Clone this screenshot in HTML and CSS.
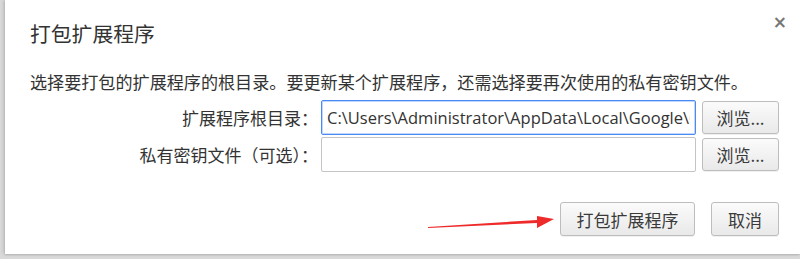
FILE: index.html
```html
<!DOCTYPE html>
<html lang="zh-CN">
<head>
<meta charset="utf-8">
<title>打包扩展程序</title>
<link rel="stylesheet" href="styles.css">
</head>
<body>
<div class="dialog">
  <div class="header">
    <h1 class="title">打包扩展程序</h1>
    <span class="close">×</span>
  </div>
  <p class="desc">选择要打包的扩展程序的根目录。要更新某个扩展程序，还需选择要再次使用的私有密钥文件。</p>
  <div class="form">
    <label class="label">扩展程序根目录：</label>
    <input class="field focused" type="text" value="C:\Users\Administrator\AppData\Local\Google\Chrome\User Data">
    <button class="btn browse">浏览...</button>
    <label class="label">私有密钥文件（可选）：</label>
    <input class="field" type="text" value="">
    <button class="btn browse">浏览...</button>
  </div>
  <div class="footer">
    <button class="btn pack">打包扩展程序</button>
    <button class="btn cancel">取消</button>
  </div>
  <svg class="arrow" width="140" height="24" viewBox="0 0 140 24">
    <polygon points="2,17 111,10 111,6 128,9 111,18 111,13 2,18" fill="#ee2a2a"/>
  </svg>
</div>
</body>
</html>
```
FILE: styles.css
```css
html, body {
  margin: 0;
  padding: 0;
}
body {
  width: 800px;
  height: 259px;
  background: #d9d9d9;
  overflow: hidden;
  font-family: "Noto Sans CJK SC", "Noto Sans", sans-serif;
  color: #333;
}
.dialog {
  position: relative;
  margin-left: 5px;
  height: 254px;
  box-sizing: border-box;
  background: #fff;
  padding: 18px 21px 0 25px;
  box-shadow: -2px 0 3px rgba(0,0,0,0.10), 0 1px 2px rgba(0,0,0,0.15);
}
.header {
  display: flex;
  justify-content: space-between;
  align-items: flex-start;
}
.title {
  margin: 0;
  font-size: 20.8px;
  font-weight: normal;
  line-height: 30px;
  color: #333;
}
.close {
  font-family: "DejaVu Sans", sans-serif;
  font-size: 17px;
  font-weight: bold;
  color: #777;
  line-height: 14px;
  margin-top: -3px;
  margin-right: -8px;
}
.desc {
  margin: 22px 0 0;
  font-size: 17.1px;
  line-height: 24px;
  white-space: nowrap;
}
.form {
  margin-top: 6px;
  display: grid;
  grid-template-columns: 1fr 375px 77px;
  column-gap: 6px;
  row-gap: 2px;
  align-items: center;
}
.label {
  text-align: right;
  font-size: 17px;
  margin-right: -3px;
  white-space: nowrap;
}
.field {
  box-sizing: border-box;
  height: 35px;
  width: 375px;
  margin: 0;
  border: 1px solid #c4c4c4;
  border-radius: 2px;
  padding: 0 5px;
  font-family: "Open Sans", "Noto Sans", sans-serif;
  font-size: 16.5px;
  color: #333;
  background: #fff;
  outline: none;
}
.field.focused {
  border-color: #4a8af4;
  box-shadow: inset 0 0 0 1px rgba(74,138,244,0.35);
}
.btn {
  box-sizing: border-box;
  margin: 0;
  border: 1px solid #bdbdbd;
  border-radius: 3px;
  background: linear-gradient(#fbfbfb, #e9e9e9);
  box-shadow: 0 1px 0 rgba(0,0,0,0.06);
  font-family: "Noto Sans CJK SC", sans-serif;
  font-size: 17px;
  color: #3a3a3a;
  padding: 0;
}
.browse {
  height: 33px;
  width: 77px;
}
.footer {
  margin-top: 30px;
  display: flex;
  justify-content: flex-end;
  gap: 16px;
}
.pack {
  width: 135px;
  height: 34px;
}
.cancel {
  width: 68px;
  height: 34px;
}
.arrow {
  position: absolute;
  left: 421px;
  top: 210px;
}
```
